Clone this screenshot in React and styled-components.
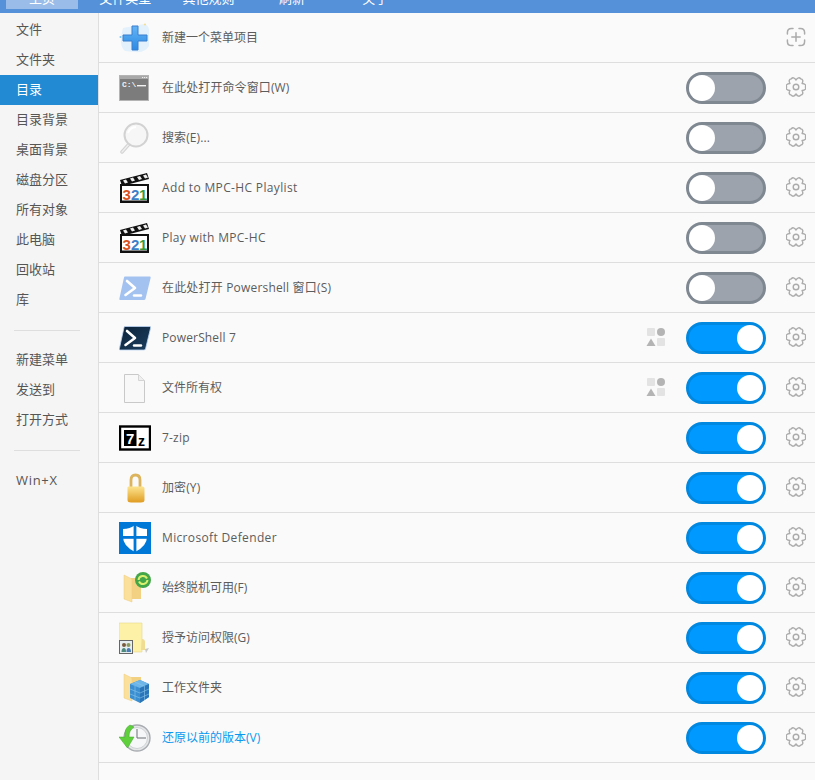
import React from 'react';
import styled, { createGlobalStyle } from 'styled-components';

const Global = createGlobalStyle`
  html, body {
    margin: 0;
    padding: 0;
    background: #fafafa;
    overflow: hidden;
  }
  body {
    font-family: "Open Sans", "Noto Sans CJK SC", sans-serif;
  }
`;

const Page = styled.div`
  width: 815px;
  height: 780px;
  display: flex;
  flex-direction: column;
  overflow: hidden;
`;

const TopBar = styled.div`
  height: 13px;
  flex: none;
  box-sizing: border-box;
  padding: 0 0 4px 6px;
  display: flex;
  align-items: flex-end;
  gap: 11.3px;
  background: #5591d9;
  overflow: hidden;
`;

const Tab = styled.div`
  width: 72px;
  height: 24px;
  flex: none;
  display: flex;
  align-items: center;
  justify-content: center;
  color: #fff;
  font-size: 13px;
  background: ${(p) => (p.$active ? '#9abce8' : 'transparent')};
`;

const Body = styled.div`
  flex: 1;
  display: flex;
  min-height: 0;
`;

const Sidebar = styled.div`
  width: 99px;
  flex: none;
  box-sizing: border-box;
  padding-top: 2px;
  background: #f5f5f5;
  border-right: 1px solid #dedede;
`;

const SideItem = styled.div`
  height: 30px;
  line-height: ${(p) => (p.$latin ? '30px' : '28px')};
  padding-left: 16px;
  font-size: 13px;
  letter-spacing: ${(p) => (p.$latin ? '0.7px' : '0')};
  color: ${(p) => (p.$active ? '#fff' : '#555')};
  background: ${(p) => (p.$active ? '#2289d3' : 'transparent')};
`;

const SideLine = styled.div`
  height: 1px;
  margin: 15px 18px 14px 14px;
  background: #dedede;
`;

const List = styled.div`
  flex: 1;
  min-width: 0;
`;

const Row = styled.div`
  height: 50px;
  box-sizing: border-box;
  display: flex;
  align-items: center;
  padding: 0 9px 0 20px;
  border-bottom: 1px solid #dedede;
`;

const IconBox = styled.div`
  width: 32px;
  height: 32px;
  flex: none;
  margin-right: 11px;
  svg {
    display: block;
  }
`;

// rows with only latin text sit a pixel lower than the cjk ones
const Label = styled.div`
  flex: 1;
  font-size: 12px;
  padding-bottom: ${(p) => (p.$latin ? '0' : '2px')};
  letter-spacing: ${(p) => p.$track}px;
  color: ${(p) => (p.$link ? '#0a98ee' : '#5c5c5c')};
`;

const Toggle = styled.div`
  width: 80px;
  height: 32px;
  flex: none;
  box-sizing: border-box;
  display: flex;
  justify-content: ${(p) => (p.$on ? 'flex-end' : 'flex-start')};
  border: 3px solid ${(p) => (p.$on ? '#0088e0' : '#7f8791')};
  border-radius: 16px;
  background: ${(p) => (p.$on ? '#0099ff' : '#9ca3ad')};
`;

const Knob = styled.div`
  width: 26px;
  height: 26px;
  border-radius: 50%;
  background: #fff;
`;

const RowAction = styled.div`
  width: 20px;
  height: 20px;
  flex: none;
  margin: 0 0 1px 20px;
  color: #ababab;
  svg {
    display: block;
  }
`;

const KindMark = styled.div`
  width: 20px;
  height: 20px;
  flex: none;
  margin: 0 20px 1px 0;
  svg {
    display: block;
  }
`;

const Svg = ({ children }) => (
  <svg width="32" height="32" viewBox="0 0 32 32">{children}</svg>
);

const NewIcon = () => (
  <Svg>
    <defs>
      <linearGradient id="plusFill" x1="0" y1="0" x2="0" y2="1">
        <stop offset="0" stopColor="#63b4f4" />
        <stop offset="1" stopColor="#2c8be4" />
      </linearGradient>
    </defs>
    <path d="M4 6 L25 2 Q31 3 30 12 L30 24 Q26 31 16 30 L6 29 Q1 25 2 15 Z" fill="#e3f1fc" />
    <path d="M13 4 h6 v9 h9 v6 h-9 v9 h-6 v-9 h-9 v-6 h9 Z" fill="url(#plusFill)" stroke="#3a7fcf" strokeWidth="1" strokeLinejoin="round" />
    <circle cx="26" cy="2.5" r="1" fill="#f5dc8c" />
    <circle cx="1.5" cy="15" r="1" fill="#7cc4f5" />
  </Svg>
);

const CmdIcon = () => (
  <Svg>
    <rect x="0.5" y="3.5" width="29" height="25" fill="#7c7c7c" stroke="#b4b4b4" />
    <rect x="1" y="4" width="28" height="3" fill="#a8a8a8" />
    <rect x="23" y="5" width="1.2" height="1" fill="#eee" />
    <rect x="25" y="5" width="1.2" height="1" fill="#eee" />
    <rect x="27" y="5" width="1.2" height="1" fill="#eee" />
    <text x="3" y="15" fontFamily="Liberation Mono, monospace" fontSize="8" fontWeight="700" fill="#f2f2f2">C:\</text>
    <rect x="18" y="13" width="9" height="1.4" fill="#f2f2f2" />
  </Svg>
);

const SearchIcon = () => (
  <Svg>
    <path d="M3 30 L11 21" stroke="#d2d2d2" strokeWidth="3.4" strokeLinecap="round" />
    <path d="M3 30 L11 21" stroke="#eeeeee" strokeWidth="1.4" strokeLinecap="round" />
    <circle cx="17" cy="13" r="11.5" fill="#f6f6f6" stroke="#d2d2d2" strokeWidth="2" />
    <path d="M9 11 A9 9 0 0 1 17 5" fill="none" stroke="#fff" strokeWidth="2" />
  </Svg>
);

const ClapperIcon = () => (
  <Svg>
    <path d="M1 8 L28 1 L30 7 L3 14 Z" fill="#111" />
    <path d="M4 8.5 l3 -1 l2 3 l-3 1 Z M11 6.5 l3 -1 l2 3 l-3 1 Z M18 5 l3 -1 l2 3 l-3 1 Z M24 3.5 l3 -1 l2 3 l-3 1 Z" fill="#eee" />
    <rect x="2" y="13" width="27" height="17" fill="#fff" stroke="#111" strokeWidth="2" />
    <rect x="2" y="28.5" width="28" height="2.5" fill="#111" />
    <text x="3.6" y="27.5" fontFamily="Liberation Sans, sans-serif" fontSize="15" fontWeight="700" fill="#d9541e">3</text>
    <text x="12" y="27.5" fontFamily="Liberation Sans, sans-serif" fontSize="15" fontWeight="700" fill="#3d80c8">2</text>
    <text x="20" y="27.5" fontFamily="Liberation Sans, sans-serif" fontSize="15" fontWeight="700" fill="#3b9a3b">1</text>
  </Svg>
);

const PsIcon = ({ dark }) => (
  <Svg>
    <defs>
      <linearGradient id="psDark" x1="0" y1="0" x2="1" y2="1">
        <stop offset="0" stopColor="#0c2238" />
        <stop offset="1" stopColor="#1c3f60" />
      </linearGradient>
    </defs>
    <path
      d="M6 4.5 H31 Q32 4.5 31.6 6 L26.5 27 Q26 28 25 28 H1 Q0 28 0.4 26.6 L5 5.5 Q5.2 4.5 6 4.5 Z"
      fill={dark ? 'url(#psDark)' : '#a4c2f0'}
      stroke={dark ? '#bcd4f4' : 'none'}
      strokeWidth="0.8"
    />
    <path d="M8 9 L16 16 L6.5 23" fill="none" stroke="#fff" strokeWidth="2.6" strokeLinecap="round" strokeLinejoin="round" />
    <path d="M15 23.5 H22" stroke="#fff" strokeWidth="2.4" strokeLinecap="round" />
  </Svg>
);

const FileIcon = () => (
  <Svg>
    <path d="M5.5 2.5 H19.5 L25.5 8.5 V30.5 H5.5 Z" fill="#f8f8f8" stroke="#c9c9c9" />
    <path d="M19.5 2.5 V8.5 H25.5" fill="#efefef" stroke="#d4d4d4" />
  </Svg>
);

const ZipIcon = () => (
  <Svg>
    <rect x="1" y="4.5" width="30" height="23" fill="#fff" stroke="#000" strokeWidth="2.4" />
    <rect x="5" y="8" width="12.5" height="16" fill="#000" />
    <text x="7" y="22" fontFamily="Liberation Sans, sans-serif" fontSize="15" fontWeight="700" fill="#fff">7</text>
    <text x="19" y="23.5" fontFamily="Liberation Sans, sans-serif" fontSize="14" fontWeight="700" fill="#000">z</text>
  </Svg>
);

const LockIcon = () => (
  <Svg>
    <defs>
      <linearGradient id="lockFill" x1="0" y1="0" x2="0" y2="1">
        <stop offset="0" stopColor="#fde48f" />
        <stop offset="1" stopColor="#e09c22" />
      </linearGradient>
    </defs>
    <path d="M12 16 V8 Q12 3 16.5 3 Q21 3 21 8 V16" fill="none" stroke="#dcb45e" strokeWidth="2.8" />
    <path d="M8.5 15.5 Q8 15 9.5 14.5 H24 Q25.5 15 25.5 16 V28 Q25.5 30.5 22 30.5 H12 Q8.5 30.5 8.5 28 Z" fill="url(#lockFill)" />
  </Svg>
);

const DefenderIcon = () => (
  <Svg>
    <rect width="32" height="32" fill="#0078d7" />
    <path d="M16 3 Q21 7 28 7 V15 Q28 24 16 30 Q4 24 4 15 V7 Q11 7 16 3 Z" fill="#fff" />
    <rect x="14.6" y="2" width="2.8" height="29" fill="#0078d7" />
    <rect x="3" y="14" width="26" height="2.8" fill="#0078d7" />
  </Svg>
);

const Folder = ({ x = 5, y = 3, h = 26 }) => (
  <g transform={`translate(${x} ${y})`}>
    <path d={`M7 3 H17 V${h - 4} H7 Z`} fill="#f3d183" />
    <path d={`M0 0 L8 4 V${h - 1} L0 ${h - 4} Z`} fill="#fae09a" stroke="#eccb7c" strokeWidth="0.5" />
  </g>
);

const SyncFolderIcon = () => (
  <Svg>
    <Folder x={5} y={3} h={28} />
    <circle cx="24" cy="8" r="8" fill="#43a648" />
    <path d="M19.5 8 A4.5 4.5 0 0 1 28 6.5 M28.5 8 A4.5 4.5 0 0 1 20 9.5" fill="none" stroke="#d9ef6f" strokeWidth="2" />
  </Svg>
);

const GrantIcon = () => (
  <Svg>
    <path d="M0 1 H23 V30 H0 Z" fill="#fdf1a8" stroke="#e8d98a" strokeWidth="0.6" />
    <path d="M23 17 Q26 17 26 20 V28 H22 Z" fill="#f1dc94" />
    <path d="M26 27 L30 26 L27 31 Z" fill="#c8c8c8" />
    <rect x="0.5" y="18.5" width="13" height="13" fill="#e6eef0" stroke="#666" />
    <circle cx="5" cy="23" r="2" fill="#7a5a3c" />
    <circle cx="9.5" cy="23" r="2" fill="#8b9a5c" />
    <path d="M2.5 30 Q2.5 26 5 26 Q7 26 7 30 Z" fill="#4e8a7c" />
    <path d="M7.5 30 Q7.5 26 9.5 26 Q12 26 12 30 Z" fill="#4a7db5" />
  </Svg>
);

const WorkFolderIcon = () => (
  <Svg>
    <Folder x={5} y={2} h={28} />
    <path d="M11 12 L21 8 L30 12 V25 L21 31 L11 26 Z" fill="#3b8fd0" />
    <path d="M11 12 L21 16 L30 12 L21 8 Z" fill="#6fb6e8" />
    <path d="M21 16 V31 L30 25 V12 Z" fill="#2a76b8" />
    <path d="M11 17 L21 21 L30 17 M11 22 L21 26 L30 22 M16 10 L25 14 M16 14 V28.5 M25.5 14 V28" fill="none" stroke="#8cc8ee" strokeWidth="0.6" />
  </Svg>
);

const RestoreIcon = () => (
  <Svg>
    <circle cx="18" cy="16" r="13" fill="#e4e6e8" stroke="#a9adb1" strokeWidth="1.4" />
    <circle cx="18" cy="16" r="10.5" fill="#f6f7f8" stroke="#cfd2d5" />
    <path d="M18 7 V16 H27" fill="none" stroke="#6a6f74" strokeWidth="1" />
    <path d="M11 3 Q5 6 6 15 H0 L8.5 26 L15 15 H10 Q10 8 15 5 Z" fill="#5fd03c" stroke="#3fa528" strokeWidth="0.5" />
  </Svg>
);

const AddOutline = () => (
  <svg width="20" height="20" viewBox="0 0 20 20" fill="none" stroke="currentColor" strokeWidth="1.5" strokeLinecap="round" strokeLinejoin="round">
    <path d="M7 1.4 H5.5 Q1.4 1.4 1.4 5.5 V7 M13 1.4 H14.5 Q18.6 1.4 18.6 5.5 V7 M1.4 13 V14.5 Q1.4 18.6 5.5 18.6 H7 M18.6 13 V14.5 Q18.6 18.6 14.5 18.6 H13 M10 5.8 V14.2 M5.8 10 H14.2" />
  </svg>
);

// six soft lobes pointing left and right, valleys between them
const gearPath = () => {
  const at = (deg, r) => {
    const a = (deg * Math.PI) / 180;
    return `${(10 + r * Math.cos(a)).toFixed(2)} ${(10 + r * Math.sin(a)).toFixed(2)}`;
  };
  let d = `M${at(-30, 7)}`;
  for (let i = 0; i < 6; i++) {
    const peak = i * 60;
    d += ` C${at(peak - 20, 9.8)} ${at(peak - 10, 10.4)} ${at(peak, 9.4)}`;
    d += ` C${at(peak + 10, 10.4)} ${at(peak + 20, 9.8)} ${at(peak + 30, 7)}`;
  }
  return `${d} Z`;
};

const GearIcon = () => (
  <svg width="20" height="20" viewBox="0 0 20 20" fill="none" stroke="currentColor" strokeWidth="1.4" strokeLinejoin="round">
    <path d={gearPath()} />
    <circle cx="10" cy="10" r="2.8" />
  </svg>
);

const KindIcon = () => (
  <svg width="20" height="20" viewBox="0 0 20 20">
    <rect x="1" y="1" width="8" height="8" rx="1" fill="#e3e3e3" />
    <circle cx="15" cy="5" r="4" fill="#b4b4b4" />
    <path d="M5 11.5 L9.5 19 H0.5 Z" fill="#b4b4b4" />
    <rect x="11" y="11" width="8" height="8" rx="1" fill="#e3e3e3" />
  </svg>
);

const topTabs = ['主页', '文件类型', '其他规则', '刷新', '关于'];
const sideTop = ['文件', '文件夹', '目录', '目录背景', '桌面背景', '磁盘分区', '所有对象', '此电脑', '回收站', '库'];
const sideMiddle = ['新建菜单', '发送到', '打开方式'];

const rows = [
  { icon: <CmdIcon />, label: '在此处打开命令窗口(W)', on: false, track: 0.1 },
  { icon: <SearchIcon />, label: '搜索(E)...', on: false, track: 0.1 },
  { icon: <ClapperIcon />, label: 'Add to MPC-HC Playlist', on: false, track: 0.35, latin: true },
  { icon: <ClapperIcon />, label: 'Play with MPC-HC', on: false, track: 0.3, latin: true },
  { icon: <PsIcon />, label: '在此处打开 Powershell 窗口(S)', on: false, track: 0.18 },
  { icon: <PsIcon dark />, label: 'PowerShell 7', on: true, kind: true, track: 0.15, latin: true },
  { icon: <FileIcon />, label: '文件所有权', on: true, kind: true, track: 0 },
  { icon: <ZipIcon />, label: '7-zip', on: true, track: 0.2, latin: true },
  { icon: <LockIcon />, label: '加密(Y)', on: true, track: 0.1 },
  { icon: <DefenderIcon />, label: 'Microsoft Defender', on: true, track: 0.35, latin: true },
  { icon: <SyncFolderIcon />, label: '始终脱机可用(F)', on: true, track: 0 },
  { icon: <GrantIcon />, label: '授予访问权限(G)', on: true, track: 0 },
  { icon: <WorkFolderIcon />, label: '工作文件夹', on: true, track: 0 },
  { icon: <RestoreIcon />, label: '还原以前的版本(V)', on: true, link: true, track: 0 },
];

export default function App() {
  return (
    <Page>
      <Global />
      <TopBar>
        {topTabs.map((t, i) => (
          <Tab key={t} $active={i === 0}>{t}</Tab>
        ))}
      </TopBar>
      <Body>
        <Sidebar>
          {sideTop.map((s) => (
            <SideItem key={s} $active={s === '目录'}>{s}</SideItem>
          ))}
          <SideLine />
          {sideMiddle.map((s) => (
            <SideItem key={s}>{s}</SideItem>
          ))}
          <SideLine />
          <SideItem $latin>Win+X</SideItem>
        </Sidebar>
        <List>
          <Row>
            <IconBox><NewIcon /></IconBox>
            <Label $track={0}>新建一个菜单项目</Label>
            <RowAction><AddOutline /></RowAction>
          </Row>
          {rows.map((r) => (
            <Row key={r.label}>
              <IconBox>{r.icon}</IconBox>
              <Label $link={r.link} $latin={r.latin} $track={r.track}>{r.label}</Label>
              {r.kind && <KindMark><KindIcon /></KindMark>}
              <Toggle $on={r.on}><Knob /></Toggle>
              <RowAction><GearIcon /></RowAction>
            </Row>
          ))}
        </List>
      </Body>
    </Page>
  );
}
